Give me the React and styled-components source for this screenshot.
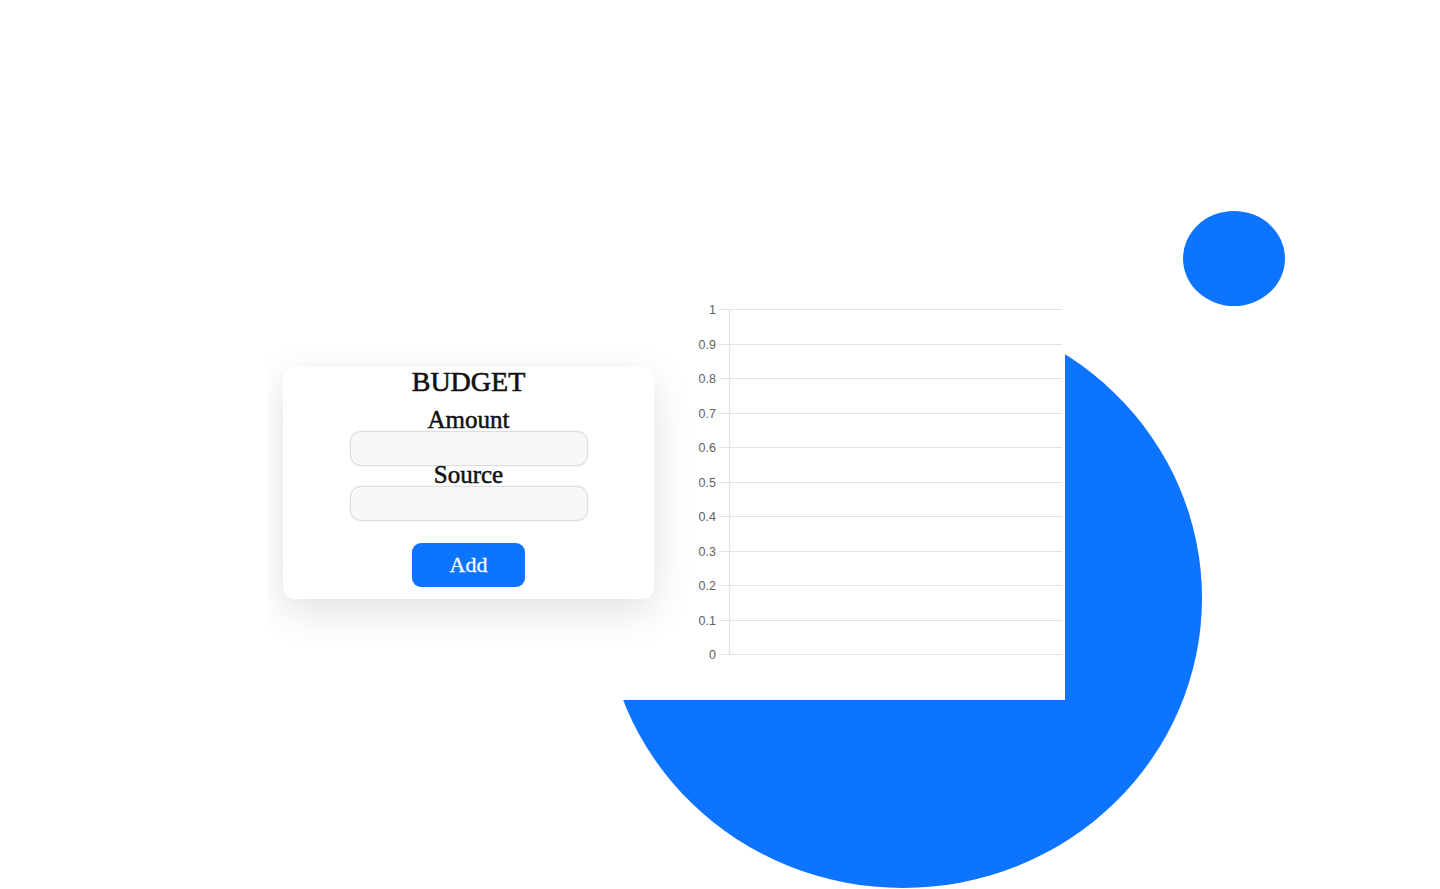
import React from "react";
import styled, { createGlobalStyle } from "styled-components";

const BLUE = "#0d74ff";

const GlobalStyle = createGlobalStyle`
  html, body {
    margin: 0;
    padding: 0;
    background: #ffffff;
  }
  * { box-sizing: border-box; }
`;

const Page = styled.div`
  position: relative;
  width: 100%;
  height: 889px;
  overflow: hidden;
  background: #ffffff;
  font-family: "Liberation Serif", "Times New Roman", serif;
`;

const Blob = styled.div`
  position: absolute;
  left: ${(p) => p.$left}px;
  top: ${(p) => p.$top}px;
  width: ${(p) => p.$w}px;
  height: ${(p) => p.$h}px;
  border-radius: 50%;
  background: ${BLUE};
  z-index: 0;
`;

const Content = styled.main`
  position: relative;
  z-index: 1;
  display: flex;
  align-items: flex-start;
  padding-top: 300px;
  padding-left: 283px;
`;

const Card = styled.form`
  position: relative;
  z-index: 2;
  margin-top: 67px;
  width: 371px;
  height: 232px;
  background: #ffffff;
  border-radius: 12px;
  box-shadow: 0 12px 40px rgba(0, 0, 0, 0.12);
  clip-path: inset(-80px -80px -80px -15px);
  display: flex;
  flex-direction: column;
  align-items: center;
`;

const Title = styled.h2`
  margin: 0;
  font-family: "Liberation Serif", "Times New Roman", serif;
  font-size: 28px;
  line-height: 30px;
  font-weight: 400;
  color: #111;
  -webkit-text-stroke: 0.6px #111;
`;

const Label = styled.label`
  display: block;
  margin-top: ${(p) => p.$mt || 0}px;
  margin-bottom: 2px;
  font-family: "Liberation Serif", "Times New Roman", serif;
  font-size: 25px;
  line-height: 18px;
  font-weight: 400;
  color: #111;
  -webkit-text-stroke: 0.5px #111;
`;

const Input = styled.input`
  display: block;
  width: 238px;
  height: 35px;
  margin: 0;
  padding: 0 12px;
  border: 1.5px solid #dedede;
  border-radius: 11px;
  background: #f8f8f8;
  box-shadow: 0 0 2px rgba(0, 0, 0, 0.12);
  outline: none;
  font-family: "Liberation Serif", serif;
  font-size: 16px;
`;

const Button = styled.button`
  margin-top: 22px;
  width: 113px;
  height: 44px;
  border: none;
  border-radius: 9px;
  background: ${BLUE};
  color: #ffffff;
  font-family: "Liberation Serif", "Times New Roman", serif;
  font-size: 22px;
  line-height: 44px;
  padding: 0;
  cursor: pointer;
  -webkit-text-stroke: 0.3px #ffffff;
`;

const ChartPanel = styled.section`
  position: relative;
  z-index: 1;
  margin-left: -70px;
  width: 481px;
  height: 400px;
  background: #ffffff;
`;

const TICKS = [1, 0.9, 0.8, 0.7, 0.6, 0.5, 0.4, 0.3, 0.2, 0.1, 0];

function EmptyChart() {
  const top = 10;
  const step = 34.5;
  const axisX = 145.5;
  const gridStart = 135;
  const gridEnd = 478;
  return (
    <svg width="481" height="400" viewBox="0 0 481 400">
      {TICKS.map((t, i) => {
        const y = Math.round(top + i * step) - 0.5;
        return (
          <g key={t}>
            <line x1={gridStart} x2={gridEnd} y1={y} y2={y} stroke="#e2e2e2" strokeWidth="1.2" />
            <text
              x="132"
              y={y}
              textAnchor="end"
              dominantBaseline="central"
              fontFamily="'Liberation Sans', Arial, sans-serif"
              fontSize="12.5"
              fill="#5f5f5f"
            >
              {t}
            </text>
          </g>
        );
      })}
      <line x1={axisX} x2={axisX} y1={top} y2={top + 10 * step} stroke="#e2e2e2" strokeWidth="1.2" />
    </svg>
  );
}

export default function App() {
  return (
    <>
      <GlobalStyle />
      <Page>
        <Blob $left={604} $top={308} $w={598} $h={580} />
        <Blob $left={1183} $top={211} $w={102} $h={95} />
        <Content>
          <Card onSubmit={(e) => e.preventDefault()}>
            <Title>BUDGET</Title>
            <Label $mt={14} htmlFor="amount">Amount</Label>
            <Input id="amount" type="text" />
            <Label htmlFor="source">Source</Label>
            <Input id="source" type="text" />
            <Button type="submit">Add</Button>
          </Card>
          <ChartPanel>
            <EmptyChart />
          </ChartPanel>
        </Content>
      </Page>
    </>
  );
}
